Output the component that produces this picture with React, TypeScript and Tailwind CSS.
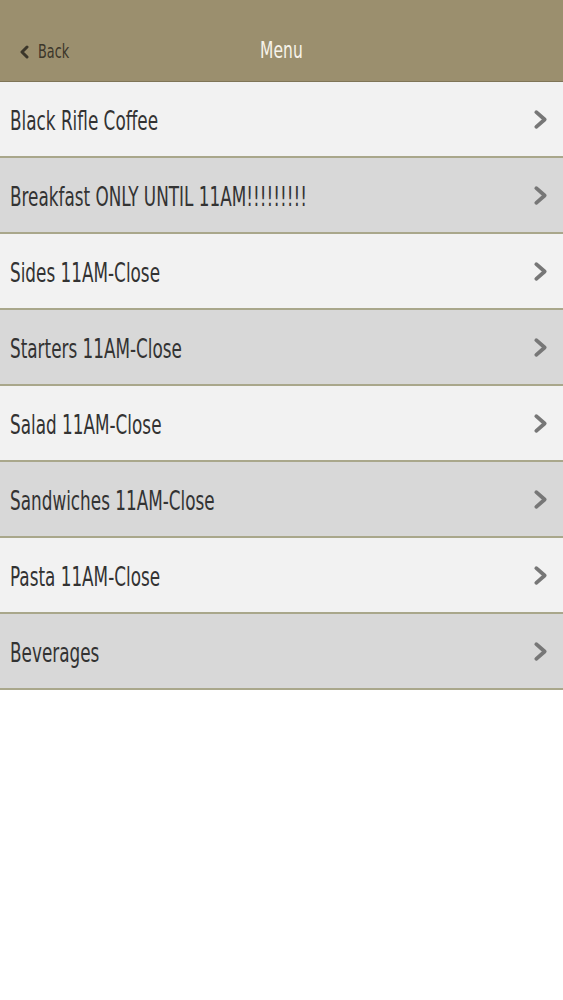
import React from "react";

const items = [
  "Black Rifle Coffee",
  "Breakfast ONLY UNTIL 11AM!!!!!!!!!",
  "Sides 11AM-Close",
  "Starters 11AM-Close",
  "Salad 11AM-Close",
  "Sandwiches 11AM-Close",
  "Pasta 11AM-Close",
  "Beverages",
];

const font = { fontFamily: '"DejaVu Sans Condensed", "DejaVu Sans", sans-serif' };

function Chevron({ className }: { className?: string }) {
  return (
    <svg viewBox="0 0 16 20" className={className} fill="none">
      <path d="M4 3 L12 10 L4 17" stroke="currentColor" strokeWidth="3.6" strokeLinecap="round" strokeLinejoin="round" />
    </svg>
  );
}

export default function App() {
  return (
    <div className="w-[563px] h-[1000px] bg-white" style={font}>
      <div className="h-[82px] bg-[#9b8f6e] border-b border-[#7f7557] flex items-end pb-[20px] relative">
        <div className="flex items-center pl-[19px] text-[#3b362a]">
          <svg viewBox="0 0 10 14" className="w-[11px] h-[14px] mr-[8px]" fill="none">
            <path d="M7.5 2 L2.5 7 L7.5 12" stroke="currentColor" strokeWidth="3" strokeLinecap="round" strokeLinejoin="round" />
          </svg>
          <span className="text-[19px] leading-none inline-block origin-left scale-x-[0.75]">Back</span>
        </div>
        <div className="absolute left-0 right-0 bottom-[19px] flex justify-center">
          <span className="text-[23px] leading-none text-[#f7f3ea] inline-block scale-x-[0.75]">Menu</span>
        </div>
      </div>
      {items.map((t, i) => (
        <div
          key={t}
          className={`h-[76px] border-b-2 border-[#a9a78b] flex items-center justify-between pl-[10px] pr-[14px] ${
            i % 2 === 0 ? "bg-[#f2f2f2]" : "bg-[#d8d8d8]"
          }`}
        >
          <span className="pt-[3px] text-[26px] leading-none text-[#333333] inline-block origin-left scale-x-[0.72] whitespace-nowrap">{t}</span>
          <Chevron className="w-[17px] h-[21px] text-[#777777]" />
        </div>
      ))}
    </div>
  );
}
